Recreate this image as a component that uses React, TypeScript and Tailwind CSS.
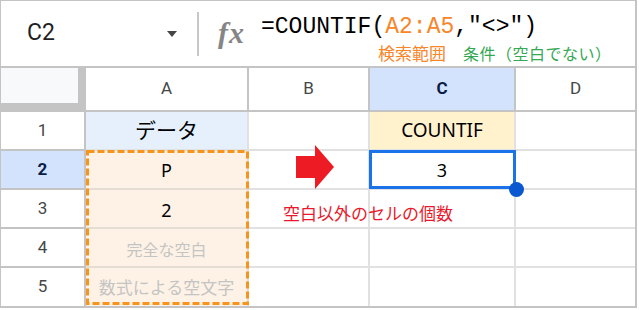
import React from 'react'

const head = 'flex items-center justify-center border-[#c4c4c4] font-["Roboto",sans-serif] text-[17px]'
const cell = 'flex items-center justify-center border-[#e1e1e1] font-["Noto_Sans","Noto_Sans_CJK_JP",sans-serif]'

export default function App() {
  return (
    <div className="relative w-[639px] h-[310px] bg-white">
      <div className="w-[637px] h-[308px] border-l border-t border-r-2 border-b-2 border-[#c4c4c4] flex flex-col">
        {/* Formula bar */}
        <div className="h-[67px] shrink-0 border-b-2 border-[#c4c4c4] flex items-center">
          <div className="w-[196px] flex items-center pl-[26px] pr-[20px]">
            <span className="font-['Roboto',sans-serif] text-[23px] text-[#1f1f1f]">C2</span>
            <svg className="ml-auto" width="10" height="6" viewBox="0 0 10 6">
              <polygon points="0,0 10,0 5,6" fill="#444746" />
            </svg>
          </div>
          <div className="w-[2px] h-[44px] bg-[#c7c7c7]" />
          <span className="ml-[19px] w-[28px] font-['Liberation_Serif',serif] italic font-bold text-[30px] leading-none text-[#858585] tracking-[1px] -mt-[2px]">
            fx
          </span>
          <div className="ml-[15px] flex flex-col self-start pt-[12px]">
            <div className="font-['Liberation_Mono',monospace] text-[23px] leading-[28px] text-black">
              =COUNTIF(<span className="text-[#f7862a]">A2:A5</span>,"&lt;&gt;")
            </div>
            <div className="flex items-baseline font-['Noto_Sans_CJK_JP',sans-serif] text-[17px] leading-[22px] mt-[1px]">
              <span className="ml-[117px] text-[#f7862a]">検索範囲</span>
              <span className="ml-[17px] text-[16px] tracking-[0.5px] text-[#34a853]">条件（空白でない）</span>
            </div>
          </div>
        </div>

        {/* Grid */}
        <div className="grid grid-cols-[85px_163px_121px_146px_119px] grid-rows-[44px_39px_39px_39px_39px_38px]">
          <div className="border-r-[8px] border-b-[9px] border-[#c4c4c4] bg-[#f8f9fa]" />
          <div className={`${head} border-r-2 border-b-2 text-[#444746]`}>A</div>
          <div className={`${head} border-r-2 border-b-2 text-[#444746]`}>B</div>
          <div className={`${head} border-r-2 border-b-2 bg-[#d3e3fd] font-bold text-[#0b1d45]`}>C</div>
          <div className={`${head} border-b-2 text-[#444746]`}>D</div>

          <div className={`${head} border-r-2 border-b-2 text-[#444746]`}>1</div>
          <div className={`${cell} border-r-2 border-b-2 bg-[#e5f0fc] text-[21px] text-black`}>データ</div>
          <div className={`${cell} border-r-2 border-b-2`} />
          <div className={`${cell} border-r-2 border-b-2 bg-[#fff2cc] text-[19px] text-black`}>COUNTIF</div>
          <div className={`${cell} border-b-2`} />

          <div className={`${head} border-r-2 border-b-2 bg-[#d3e3fd] font-bold text-[#0b1d45]`}>2</div>
          <div className={`${cell} border-r-2 border-b-2 border-[#e6ddd2] bg-[#fdf2e5] text-[18px] text-black pt-[1px]`}>P</div>
          <div className={`${cell} border-r-2 border-b-2`} />
          <div className={`${cell} border-r-2 border-b-2 text-[18px] text-black pt-[1px]`}>3</div>
          <div className={`${cell} border-b-2`} />

          <div className={`${head} border-r-2 border-b-2 text-[#444746]`}>3</div>
          <div className={`${cell} border-r-2 border-b-2 border-[#e6ddd2] bg-[#fdf2e5] text-[18px] text-black pt-[4px]`}>2</div>
          <div className={`${cell} border-r-2 border-b-2`} />
          <div className={`${cell} border-r-2 border-b-2`} />
          <div className={`${cell} border-b-2`} />

          <div className={`${head} border-r-2 border-b-2 text-[#444746]`}>4</div>
          <div className={`${cell} border-r-2 border-b-2 border-[#e6ddd2] bg-[#fdf2e5] text-[16px] text-[#c4c4c4] pt-[4px]`}>完全な空白</div>
          <div className={`${cell} border-r-2 border-b-2`} />
          <div className={`${cell} border-r-2 border-b-2`} />
          <div className={`${cell} border-b-2`} />

          <div className={`${head} border-r-2 text-[#444746]`}>5</div>
          <div className={`${cell} border-r-2 border-[#e6ddd2] bg-[#fdf2e5] text-[17px] text-[#c4c4c4] pt-[2px]`}>数式による空文字</div>
          <div className={`${cell} border-r-2`} />
          <div className={`${cell} border-r-2`} />
          <div className={cell} />
        </div>
      </div>

      {/* Range highlight */}
      <svg className="absolute left-[86px] top-[150px]" width="163" height="155">
        <rect x="1.5" y="1.5" width="160" height="152" fill="none" stroke="#f7941d" strokeWidth="3" strokeDasharray="7 3" />
      </svg>

      {/* Selected cell */}
      <div className="absolute left-[369px] top-[150px] w-[147px] h-[39px] border-[3px] border-[#1a73e8]" />
      <div className="absolute left-[509px] top-[182px] w-[15px] h-[15px] rounded-full bg-[#0b57d0]" />

      {/* Arrow */}
      <svg className="absolute left-[296px] top-[145px]" width="39" height="45" viewBox="0 0 39 45">
        <polygon points="0,11 19,11 19,0 38,22 19,44 19,33 0,33" fill="#ed1c24" />
      </svg>

      <span className="absolute left-[283px] top-[201px] font-['Noto_Sans_CJK_JP',sans-serif] text-[17px] leading-[24px] text-[#e8192c]">
        空白以外のセルの個数
      </span>
    </div>
  )
}
